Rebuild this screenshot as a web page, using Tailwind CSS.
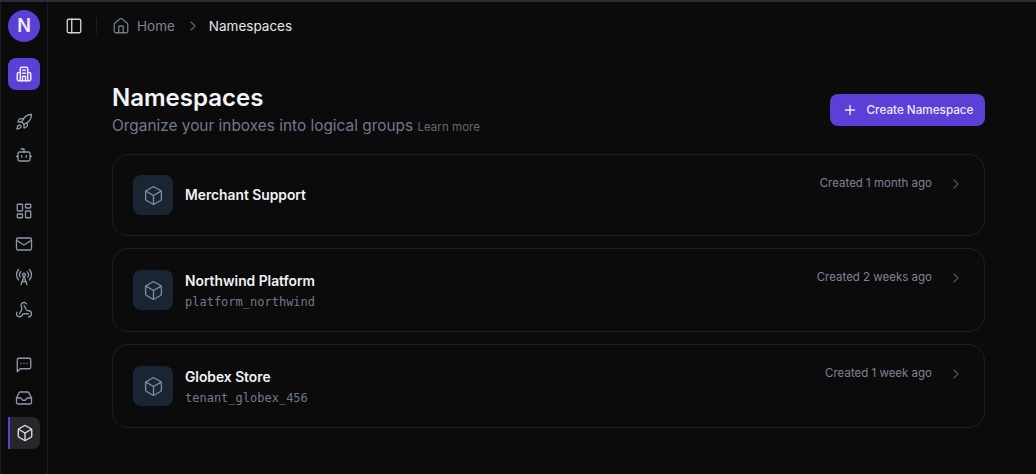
<!DOCTYPE html>
<html lang="en">

<head>
	<meta charset="UTF-8">
	<meta name="viewport" content="width=device-width, initial-scale=1.0">
	<title>Namespaces</title>
	<script src="https://cdn.jsdelivr.net/npm/@tailwindcss/browser@4"></script>
</head>

<body class="bg-[#0b0b0c] font-['Inter',sans-serif] h-[474px] overflow-hidden">
	<div class="h-[2px] bg-[#2a2c35]"></div>
	<div class="flex h-[472px]">
		<!-- sidebar -->
		<aside class="w-[48px] shrink-0 border-x border-[#1c1c1f] flex flex-col items-center text-[#8f99a8]">
			<div class="w-8 h-8 mt-2 rounded-full bg-[#5b3fd6] text-[#f0ecff] font-semibold text-lg flex items-center justify-center">N</div>
			<div class="w-8 h-8 mt-4 rounded-lg bg-[#5b3fd6] text-[#ece8ff] flex items-center justify-center">
				<svg class="w-[18px] h-[18px]" viewBox="0 0 24 24" fill="none" stroke="currentColor" stroke-width="2" stroke-linecap="round" stroke-linejoin="round"><path d="M7 21V5a2 2 0 0 1 2-2h6a2 2 0 0 1 2 2v16"/><path d="M7 10H5a2 2 0 0 0-2 2v7a2 2 0 0 0 2 2h14a2 2 0 0 0 2-2v-7a2 2 0 0 0-2-2h-2"/><path d="M10 7h4M10 11h4"/><path d="M10 21v-6h4v6"/></svg>
			</div>

			<div class="mt-4 flex flex-col gap-[1px]">
				<a class="w-8 h-8 flex items-center justify-center"><svg class="w-[18px] h-[18px]" viewBox="0 0 24 24" fill="none" stroke="currentColor" stroke-width="1.75" stroke-linecap="round" stroke-linejoin="round"><path d="M4.5 16.5c-1.5 1.26-2 5-2 5s3.74-.5 5-2c.71-.84.7-2.13-.09-2.91a2.18 2.18 0 0 0-2.91-.09z"/><path d="m12 15-3-3a22 22 0 0 1 2-3.95A12.88 12.88 0 0 1 22 2c0 2.72-.78 7.5-6 11a22.35 22.35 0 0 1-4 2z"/><path d="M9 12H4s.55-3.03 2-4c1.62-1.08 5 0 5 0"/><path d="M12 15v5s3.03-.55 4-2c1.08-1.62 0-5 0-5"/></svg></a>
				<a class="w-8 h-8 flex items-center justify-center"><svg class="w-[18px] h-[18px]" viewBox="0 0 24 24" fill="none" stroke="currentColor" stroke-width="1.75" stroke-linecap="round" stroke-linejoin="round"><path d="M12 8V4H8"/><rect width="16" height="12" x="4" y="8" rx="2"/><path d="M2 14h2M20 14h2M15 13v2M9 13v2"/></svg></a>
			</div>

			<div class="mt-[24px] flex flex-col gap-[1px]">
				<a class="w-8 h-8 flex items-center justify-center"><svg class="w-[18px] h-[18px]" viewBox="0 0 24 24" fill="none" stroke="currentColor" stroke-width="1.75" stroke-linecap="round" stroke-linejoin="round"><rect width="7" height="9" x="3" y="3" rx="1"/><rect width="7" height="5" x="14" y="3" rx="1"/><rect width="7" height="9" x="14" y="12" rx="1"/><rect width="7" height="5" x="3" y="16" rx="1"/></svg></a>
				<a class="w-8 h-8 flex items-center justify-center"><svg class="w-[18px] h-[18px]" viewBox="0 0 24 24" fill="none" stroke="currentColor" stroke-width="1.75" stroke-linecap="round" stroke-linejoin="round"><rect width="20" height="16" x="2" y="4" rx="2"/><path d="m22 7-8.97 5.7a1.94 1.94 0 0 1-2.06 0L2 7"/></svg></a>
				<a class="w-8 h-8 flex items-center justify-center"><svg class="w-[18px] h-[18px]" viewBox="0 0 24 24" fill="none" stroke="currentColor" stroke-width="1.75" stroke-linecap="round" stroke-linejoin="round"><path d="M4.9 16.1C1 12.2 1 5.8 4.9 1.9"/><path d="M7.8 4.7a6.14 6.14 0 0 0-.8 7.5"/><circle cx="12" cy="9" r="2"/><path d="M16.2 4.8c2 2 2.26 5.11.8 7.47"/><path d="M19.1 1.9a9.96 9.96 0 0 1 0 14.1"/><path d="M9.5 18h5"/><path d="m8 22 4-11 4 11"/></svg></a>
				<a class="w-8 h-8 flex items-center justify-center"><svg class="w-[18px] h-[18px]" viewBox="0 0 24 24" fill="none" stroke="currentColor" stroke-width="1.75" stroke-linecap="round" stroke-linejoin="round"><path d="M18 16.98h-5.99c-1.1 0-1.95.94-2.48 1.9A4 4 0 0 1 2 17c.01-.7.2-1.4.57-2"/><path d="m6 17 3.13-5.78c.53-.97.1-2.18-.5-3.1a4 4 0 1 1 6.89-4.06"/><path d="m12 6 3.13 5.73C15.66 12.7 16.9 13 18 13a4 4 0 0 1 0 8"/></svg></a>
			</div>

			<div class="mt-[23px] flex flex-col gap-[1px]">
				<a class="w-8 h-8 flex items-center justify-center"><svg class="w-[18px] h-[18px]" viewBox="0 0 24 24" fill="none" stroke="currentColor" stroke-width="1.75" stroke-linecap="round" stroke-linejoin="round"><path d="M21 15a2 2 0 0 1-2 2H7l-4 4V5a2 2 0 0 1 2-2h14a2 2 0 0 1 2 2z"/><path d="M8 10h.01M12 10h.01M16 10h.01"/></svg></a>
				<a class="w-8 h-8 flex items-center justify-center"><svg class="w-[18px] h-[18px]" viewBox="0 0 24 24" fill="none" stroke="currentColor" stroke-width="1.75" stroke-linecap="round" stroke-linejoin="round"><path d="M22 12h-6l-2 3h-4l-2-3H2"/><path d="M5.45 5.11 2 12v6a2 2 0 0 0 2 2h16a2 2 0 0 0 2-2v-6l-3.45-6.89A2 2 0 0 0 16.76 4H7.24a2 2 0 0 0-1.79 1.11z"/></svg></a>
				<a class="w-8 h-8 mt-[2px] rounded-r-lg bg-[#26272b] border-l-2 border-[#5b3fd6] text-[#e4e6ea] flex items-center justify-center"><svg class="w-[18px] h-[18px]" viewBox="0 0 24 24" fill="none" stroke="currentColor" stroke-width="1.75" stroke-linecap="round" stroke-linejoin="round"><path d="M21 8a2 2 0 0 0-1-1.73l-7-4a2 2 0 0 0-2 0l-7 4A2 2 0 0 0 3 8v8a2 2 0 0 0 1 1.73l7 4a2 2 0 0 0 2 0l7-4A2 2 0 0 0 21 16Z"/><path d="m3.3 7 8.7 5 8.7-5"/><path d="M12 22V12"/></svg></a>
			</div>
		</aside>

		<div class="flex-1 min-w-0">
			<!-- top bar -->
			<header class="h-[48px] flex items-center pl-[17px] text-[13.5px]">
				<svg class="w-[18px] h-[18px] text-[#d4d6da]" viewBox="0 0 24 24" fill="none" stroke="currentColor" stroke-width="1.75" stroke-linecap="round" stroke-linejoin="round"><rect width="18" height="18" x="3" y="3" rx="2"/><path d="M9 3v18"/></svg>
				<div class="w-px h-4 bg-[#1f1f22] ml-[13px] mr-[15px]"></div>
				<svg class="w-[18px] h-[18px] text-[#6f7a8a]" viewBox="0 0 24 24" fill="none" stroke="currentColor" stroke-width="1.75" stroke-linecap="round" stroke-linejoin="round"><path d="M15 21v-8a1 1 0 0 0-1-1h-4a1 1 0 0 0-1 1v8"/><path d="M3 10a2 2 0 0 1 .71-1.53l7-6a2 2 0 0 1 2.58 0l7 6A2 2 0 0 1 21 10v9a2 2 0 0 1-2 2H5a2 2 0 0 1-2-2z"/></svg>
				<span class="ml-[7px] text-[#7c8696]">Home</span>
				<svg class="w-4 h-4 ml-[10px] mr-2 text-[#5f6570]" viewBox="0 0 24 24" fill="none" stroke="currentColor" stroke-width="1.75" stroke-linecap="round" stroke-linejoin="round"><path d="m9 18 6-6-6-6"/></svg>
				<span class="text-[#e4e6ea]">Namespaces</span>
			</header>

			<main class="pt-[32px] pl-[64px] pr-[51px]">
				<div class="flex items-start justify-between">
					<div>
						<h1 class="text-2xl leading-8 font-semibold text-[#f4f5f7]">Namespaces</h1>
						<p class="text-[15.4px] leading-6 text-[#6f7a8a]">Organize your inboxes into logical groups <a class="text-[11.6px] text-[#5f6875]">Learn more</a></p>
					</div>
					<button class="mt-[12px] w-[155px] h-8 rounded-lg bg-[#5b3fd6] text-[#eeeaff] text-[11.7px] leading-4 font-medium flex items-center justify-center gap-[9px]">
						<svg class="w-4 h-4" viewBox="0 0 24 24" fill="none" stroke="currentColor" stroke-width="2" stroke-linecap="round" stroke-linejoin="round"><path d="M5 12h14M12 5v14"/></svg>
						Create Namespace
					</button>
				</div>

				<div class="mt-[15px] flex flex-col gap-3">
					<div class="h-[82px] rounded-2xl border border-[#1f1f22] flex items-center pl-5 pr-5">
						<div class="w-10 h-10 rounded-lg bg-[#1a2533] text-[#7d8ca0] flex items-center justify-center">
							<svg class="w-[21px] h-[21px]" viewBox="0 0 24 24" fill="none" stroke="currentColor" stroke-width="1.5" stroke-linecap="round" stroke-linejoin="round"><path d="M21 8a2 2 0 0 0-1-1.73l-7-4a2 2 0 0 0-2 0l-7 4A2 2 0 0 0 3 8v8a2 2 0 0 0 1 1.73l7 4a2 2 0 0 0 2 0l7-4A2 2 0 0 0 21 16Z"/><path d="m3.3 7 8.7 5 8.7-5"/><path d="M12 22V12"/></svg>
						</div>
						<div class="ml-3 flex-1">
							<div class="text-[13.8px] font-semibold text-[#f1f2f4]">Merchant Support</div>
						</div>
						<div class="self-start mt-[20px] flex items-center gap-4 text-[11.5px] text-[#7c8492]">
							<span>Created 1 month ago</span>
							<svg class="w-4 h-4 text-[#4d5159]" viewBox="0 0 24 24" fill="none" stroke="currentColor" stroke-width="2" stroke-linecap="round" stroke-linejoin="round"><path d="m9 18 6-6-6-6"/></svg>
						</div>
					</div>

					<div class="h-[84px] rounded-2xl border border-[#1f1f22] flex items-center pl-5 pr-5">
						<div class="w-10 h-10 rounded-lg bg-[#1a2533] text-[#7d8ca0] flex items-center justify-center">
							<svg class="w-[21px] h-[21px]" viewBox="0 0 24 24" fill="none" stroke="currentColor" stroke-width="1.5" stroke-linecap="round" stroke-linejoin="round"><path d="M21 8a2 2 0 0 0-1-1.73l-7-4a2 2 0 0 0-2 0l-7 4A2 2 0 0 0 3 8v8a2 2 0 0 0 1 1.73l7 4a2 2 0 0 0 2 0l7-4A2 2 0 0 0 21 16Z"/><path d="m3.3 7 8.7 5 8.7-5"/><path d="M12 22V12"/></svg>
						</div>
						<div class="ml-3 flex-1 pt-[1px]">
							<div class="text-[13.8px] font-semibold text-[#f1f2f4]">Northwind Platform</div>
							<div class="mt-[3px] text-xs font-['DejaVu_Sans_Mono',monospace] text-[#6f7a8a]">platform_northwind</div>
						</div>
						<div class="self-start mt-[20px] flex items-center gap-4 text-[11.5px] text-[#7c8492]">
							<span>Created 2 weeks ago</span>
							<svg class="w-4 h-4 text-[#4d5159]" viewBox="0 0 24 24" fill="none" stroke="currentColor" stroke-width="2" stroke-linecap="round" stroke-linejoin="round"><path d="m9 18 6-6-6-6"/></svg>
						</div>
					</div>

					<div class="h-[84px] rounded-2xl border border-[#1f1f22] flex items-center pl-5 pr-5">
						<div class="w-10 h-10 rounded-lg bg-[#1a2533] text-[#7d8ca0] flex items-center justify-center">
							<svg class="w-[21px] h-[21px]" viewBox="0 0 24 24" fill="none" stroke="currentColor" stroke-width="1.5" stroke-linecap="round" stroke-linejoin="round"><path d="M21 8a2 2 0 0 0-1-1.73l-7-4a2 2 0 0 0-2 0l-7 4A2 2 0 0 0 3 8v8a2 2 0 0 0 1 1.73l7 4a2 2 0 0 0 2 0l7-4A2 2 0 0 0 21 16Z"/><path d="m3.3 7 8.7 5 8.7-5"/><path d="M12 22V12"/></svg>
						</div>
						<div class="ml-3 flex-1 pt-[1px]">
							<div class="text-[13.8px] font-semibold text-[#f1f2f4]">Globex Store</div>
							<div class="mt-[3px] text-xs font-['DejaVu_Sans_Mono',monospace] text-[#6f7a8a]">tenant_globex_456</div>
						</div>
						<div class="self-start mt-[20px] flex items-center gap-4 text-[11.5px] text-[#7c8492]">
							<span>Created 1 week ago</span>
							<svg class="w-4 h-4 text-[#4d5159]" viewBox="0 0 24 24" fill="none" stroke="currentColor" stroke-width="2" stroke-linecap="round" stroke-linejoin="round"><path d="m9 18 6-6-6-6"/></svg>
						</div>
					</div>
				</div>
			</main>
		</div>
	</div>
</body>

</html>
